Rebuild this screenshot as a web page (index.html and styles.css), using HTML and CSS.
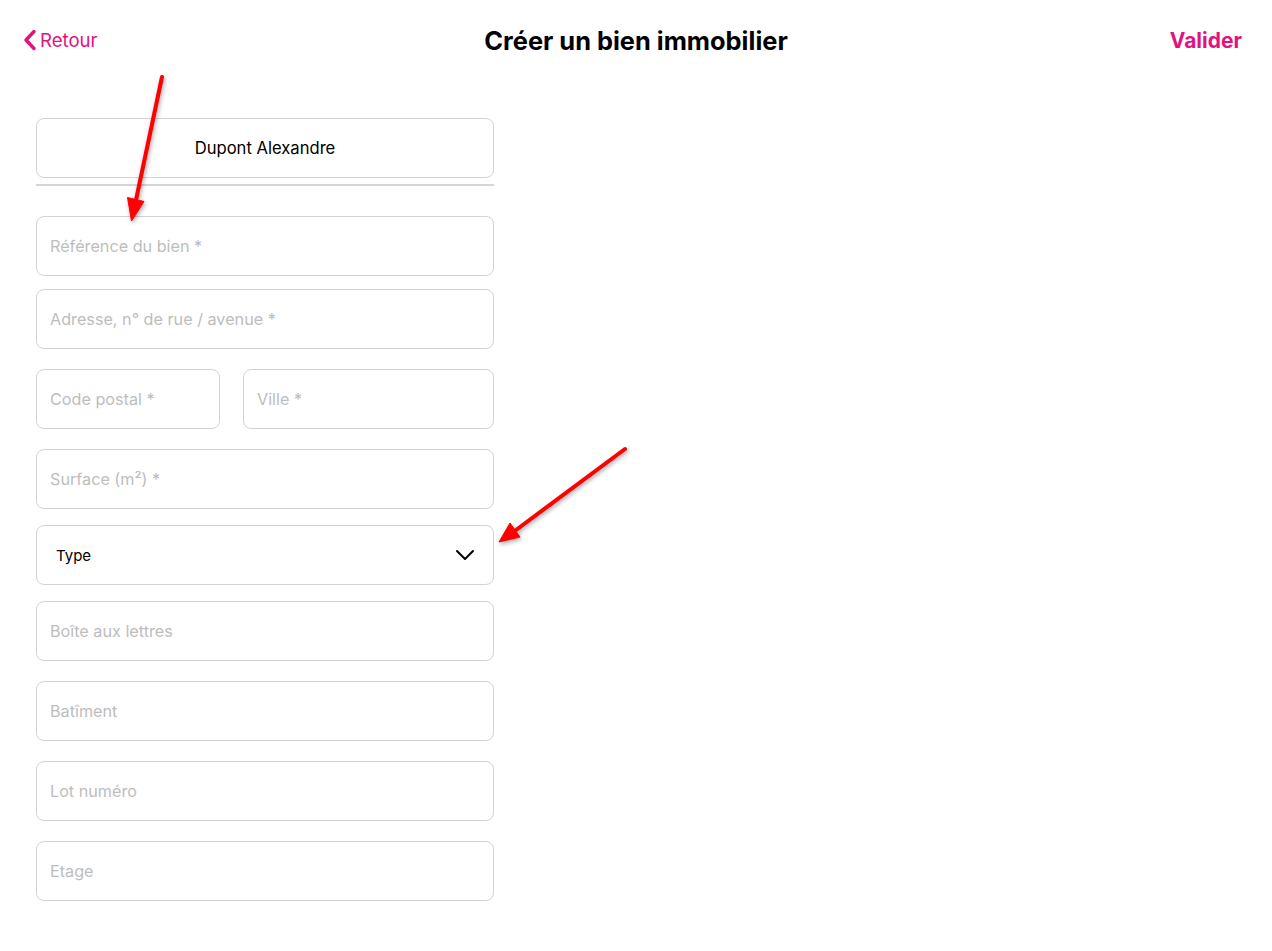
FILE: index.html
```html
<!DOCTYPE html>
<html lang="fr">

<head>
   <meta charset="UTF-8">
   <meta name="viewport" content="width=device-width, initial-scale=1.0">
   <title>Créer un bien immobilier</title>
   <link rel="stylesheet" href="styles.css">
</head>

<body>
   <header class="topbar">
      <a class="back" href="#">
         <svg class="back-icon" width="14" height="22" viewBox="0 0 14 22">
            <path d="M11 2.5 L3 11 L11 19.5" fill="none" stroke="currentColor" stroke-width="3.4"
               stroke-linecap="round" stroke-linejoin="round" />
         </svg>
         <span>Retour</span>
      </a>
      <h1 class="title">Créer un bien immobilier</h1>
      <a class="validate" href="#">Valider</a>
   </header>

   <main class="form">
      <div class="field owner">Dupont Alexandre</div>
      <div class="separator"></div>

      <input class="field input ref" type="text" placeholder="Référence du bien *">
      <input class="field input gap-s" type="text" placeholder="Adresse, n° de rue / avenue *">

      <div class="row gap-l">
         <input class="field input zip" type="text" placeholder="Code postal *">
         <input class="field input city" type="text" placeholder="Ville *">
      </div>

      <input class="field input gap-l" type="text" placeholder="Surface (m²) *">

      <div class="field select gap-m">
         <span>Type</span>
         <svg class="chevron" width="20" height="12" viewBox="0 0 20 12">
            <path d="M2 2 L10 10 L18 2" fill="none" stroke="#000" stroke-width="2" stroke-linecap="round"
               stroke-linejoin="round" />
         </svg>
      </div>

      <input class="field input gap-m" type="text" placeholder="Boîte aux lettres">
      <input class="field input gap-l" type="text" placeholder="Batîment">
      <input class="field input gap-l" type="text" placeholder="Lot numéro">
      <input class="field input gap-l" type="text" placeholder="Etage">
   </main>

   <!-- annotation arrows drawn over the form -->
   <svg class="annotations" width="1272" height="951" viewBox="0 0 1272 951">
      <g fill="#ff0000" stroke="#ff0000">
         <line x1="162" y1="77" x2="136" y2="200" stroke-width="4" stroke-linecap="round" />
         <polygon points="131.5,221 127.5,197.5 144,201.5" stroke-width="1" stroke-linejoin="round" />
         <line x1="625" y1="449" x2="516" y2="530" stroke-width="4" stroke-linecap="round" />
         <polygon points="499,542 510,523 520,537" stroke-width="1" stroke-linejoin="round" />
      </g>
   </svg>
</body>

</html>
```

FILE: styles.css
```css
body {
   font-family: Inter, "Noto Sans", sans-serif;
   margin: 0;
   background-color: #fff;
   color: #000;
   position: relative;
   min-height: 951px;
}

.topbar {
   display: flex;
   align-items: center;
   justify-content: space-between;
   height: 80px;
   padding: 0 30px 0 23px;
   position: relative;
}

.back {
   display: flex;
   align-items: center;
   gap: 3px;
   color: #e2127f;
   text-decoration: none;
   font-size: 18.6px;
}

.back-icon {
   display: block;
}

.title {
   position: absolute;
   left: 0;
   right: 0;
   margin: 0;
   text-align: center;
   font-size: 25.4px;
   font-weight: 700;
   pointer-events: none;
}

.validate {
   color: #e2127f;
   text-decoration: none;
   font-size: 21px;
   font-weight: 700;
}

.form {
   width: 458px;
   margin-left: 36px;
   display: flex;
   flex-direction: column;
}

.field {
   box-sizing: border-box;
   height: 60px;
   width: 100%;
   border: 1px solid #d3d3d3;
   border-radius: 8px;
   background-color: #fff;
}

.owner {
   margin-top: 38px;
   display: flex;
   align-items: center;
   justify-content: center;
   font-size: 16.6px;
}

.separator {
   height: 2px;
   background-color: #d6d6d6;
   margin-top: 6px;
}

.input {
   display: block;
   padding: 0 13px;
   font-family: inherit;
   font-size: 16.2px;
   color: #000;
   outline: none;
}

.input::placeholder {
   color: #bdbdbd;
}

.ref {
   margin-top: 30px;
}

.gap-s {
   margin-top: 13px;
}

.gap-m {
   margin-top: 16px;
}

.gap-l {
   margin-top: 20px;
}

.row {
   display: flex;
   gap: 23px;
}

.zip {
   width: 184px;
}

.city {
   flex: 1;
}

.select {
   display: flex;
   align-items: center;
   justify-content: space-between;
   padding: 0 18px 0 19px;
   font-size: 15px;
}

.chevron {
   display: block;
}

.annotations {
   position: absolute;
   top: 0;
   left: 0;
   pointer-events: none;
   filter: drop-shadow(1px 2px 2px rgba(0, 0, 0, 0.35));
}
```
